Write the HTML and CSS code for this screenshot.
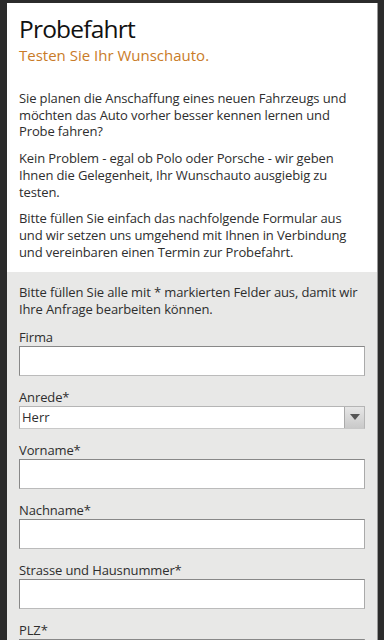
FILE: index.html
```html
<!DOCTYPE html>
<html lang="de">
<head>
  <meta charset="UTF-8">
  <title>Probefahrt</title>
  <meta name="viewport" content="width=device-width, initial-scale=1.0">
  <link rel="stylesheet" href="styles.css">
</head>
<body>
  <div class="page">
    <div class="intro">
      <h1>Probefahrt</h1>
      <h2>Testen Sie Ihr Wunschauto.</h2>
      <p>Sie planen die Anschaffung eines neuen Fahrzeugs und möchten das Auto vorher besser kennen lernen und Probe fahren?</p>
      <p>Kein Problem - egal ob Polo oder Porsche - wir geben Ihnen die Gelegenheit, Ihr Wunschauto ausgiebig zu testen.</p>
      <p>Bitte füllen Sie einfach das nachfolgende Formular aus und wir setzen uns umgehend mit Ihnen in Verbindung und vereinbaren einen Termin zur Probefahrt.</p>
    </div>

    <form class="form">
      <p class="hint">Bitte füllen Sie alle mit * markierten Felder aus, damit wir Ihre Anfrage bearbeiten können.</p>

      <div class="field">
        <label for="firma">Firma</label>
        <input type="text" id="firma" name="firma">
      </div>

      <div class="field">
        <label for="anrede">Anrede*</label>
        <div class="select">
          <span class="select-value">Herr</span>
          <span class="select-btn">
            <svg width="10" height="7" viewBox="0 0 10 7"><path d="M0 0 H10 L5 6 Z" fill="#555"/></svg>
          </span>
        </div>
      </div>

      <div class="field">
        <label for="vorname">Vorname*</label>
        <input type="text" id="vorname" name="vorname">
      </div>

      <div class="field">
        <label for="nachname">Nachname*</label>
        <input type="text" id="nachname" name="nachname">
      </div>

      <div class="field">
        <label for="strasse">Strasse und Hausnummer*</label>
        <input type="text" id="strasse" name="strasse">
      </div>

      <div class="field">
        <label for="plz">PLZ*</label>
        <input type="text" id="plz" name="plz">
      </div>
    </form>
  </div>
</body>
</html>
```

FILE: styles.css
```css
* {
  margin: 0;
  padding: 0;
  box-sizing: border-box;
}

body {
  background: #2b2b2b;
  font-family: 'Open Sans', 'DejaVu Sans', sans-serif;
  color: #2e2e2e;
  padding: 3px 6px 0 7px;
  height: 640px;
  overflow: hidden;
}

.page {
  background: #e8e8e7;
  border-right: 1px solid #999;
}

.intro {
  background: #fff;
  padding: 10px 12px 12px 12px;
}

h1 {
  font-weight: normal;
  font-size: 24.5px;
  letter-spacing: -0.8px;
  line-height: 32px;
  color: #111;
}

h2 {
  font-weight: normal;
  font-size: 15px;
  line-height: 20px;
  color: #c97b28;
  margin-bottom: 25px;
}

p {
  font-size: 13px;
  letter-spacing: -0.12px;
  line-height: 16.7px;
  margin-bottom: 10px;
}

.intro p:last-child {
  margin-bottom: 0;
}

.form {
  padding: 12px 12px 0 12px;
}

.hint {
  margin-bottom: 11px;
}

.field {
  margin-bottom: 13px;
}

label {
  display: block;
  font-size: 13px;
  letter-spacing: -0.12px;
  line-height: 17px;
}

input {
  display: block;
  width: 100%;
  height: 30px;
  background: #fff;
  border: 1px solid #888;
  border-bottom-color: #bbb;
  border-right-color: #aaa;
}

.select {
  display: flex;
  height: 23px;
  background: #fff;
  border: 1px solid #b5b5b5;
  border-bottom-color: #c8c8c8;
}

.select-value {
  flex: 1;
  font-size: 13px;
  line-height: 21px;
  padding-left: 2px;
}

.select-btn {
  width: 20px;
  display: flex;
  align-items: center;
  justify-content: center;
  background: linear-gradient(#e6e6e6, #c9c9c9);
  border-left: 1px solid #aaa;
}
```
